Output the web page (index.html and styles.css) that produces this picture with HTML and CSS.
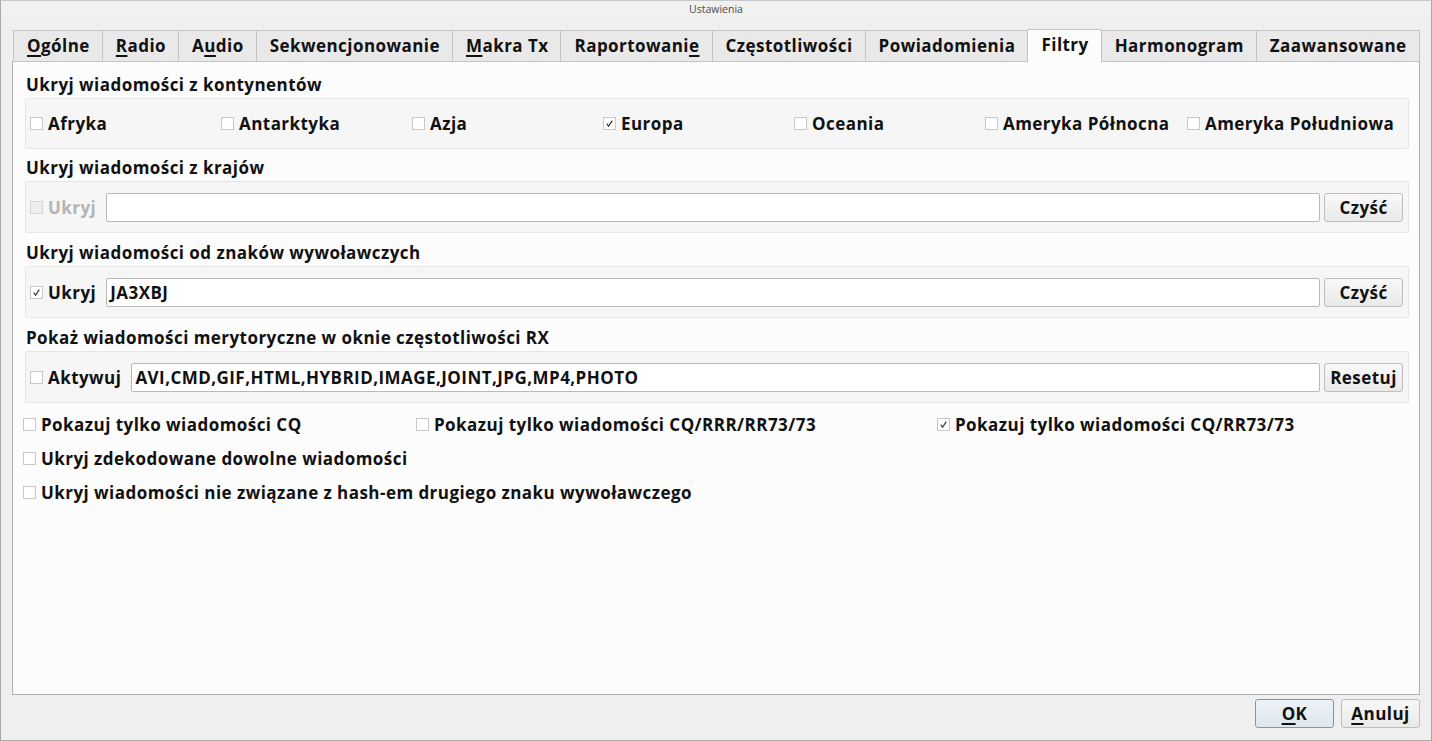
FILE: index.html
```html
<!DOCTYPE html>
<html>
<head>
    <title>Ustawienia</title>
    <meta charset="utf-8">
    <link rel="stylesheet" href="styles.css">
</head>
<body>
    <div class="window">
        <div class="titlebar">Ustawienia</div>
        <div class="dialog">
            <!-- Tab strip -->
            <div class="tabs">
                <div class="tab"><u>O</u>gólne</div>
                <div class="tab"><u>R</u>adio</div>
                <div class="tab">A<u>u</u>dio</div>
                <div class="tab">Sekwencjonowanie</div>
                <div class="tab"><u>M</u>akra Tx</div>
                <div class="tab">Raportowani<u>e</u></div>
                <div class="tab">Częstotliwości</div>
                <div class="tab">Powiadomienia</div>
                <div class="tab active">Filtry</div>
                <div class="tab">Harmonogram</div>
                <div class="tab">Zaawansowane</div>
            </div>

            <div class="panel">
                <div class="heading">Ukryj wiadomości z kontynentów</div>
                <div class="group continents">
                    <label class="check cont"><span class="box"></span>Afryka</label>
                    <label class="check cont"><span class="box"></span>Antarktyka</label>
                    <label class="check cont"><span class="box"></span>Azja</label>
                    <label class="check cont"><span class="box checked"><svg viewBox="0 0 12 12"><path d="M3 6.2 L5 9 L9 2.8"/></svg></span>Europa</label>
                    <label class="check cont"><span class="box"></span>Oceania</label>
                    <label class="check cont short"><span class="box"></span>Ameryka Północna</label>
                    <label class="check"><span class="box"></span>Ameryka Południowa</label>
                </div>

                <div class="heading">Ukryj wiadomości z krajów</div>
                <div class="group">
                    <label class="check disabled"><span class="box"></span>Ukryj</label>
                    <div class="field"></div>
                    <button class="btn">Czyść</button>
                </div>

                <div class="heading">Ukryj wiadomości od znaków wywoławczych</div>
                <div class="group">
                    <label class="check"><span class="box checked"><svg viewBox="0 0 12 12"><path d="M3 6.2 L5 9 L9 2.8"/></svg></span>Ukryj</label>
                    <div class="field">JA3XBJ</div>
                    <button class="btn">Czyść</button>
                </div>

                <div class="heading">Pokaż wiadomości merytoryczne w oknie częstotliwości RX</div>
                <div class="group">
                    <label class="check"><span class="box"></span>Aktywuj</label>
                    <div class="field">AVI,CMD,GIF,HTML,HYBRID,IMAGE,JOINT,JPG,MP4,PHOTO</div>
                    <button class="btn">Resetuj</button>
                </div>

                <div class="options">
                    <div class="row">
                        <label class="check col1"><span class="box"></span>Pokazuj tylko wiadomości CQ</label>
                        <label class="check col2"><span class="box"></span>Pokazuj tylko wiadomości CQ/RRR/RR73/73</label>
                        <label class="check"><span class="box checked"><svg viewBox="0 0 12 12"><path d="M3 6.2 L5 9 L9 2.8"/></svg></span>Pokazuj tylko wiadomości CQ/RR73/73</label>
                    </div>
                    <div class="row">
                        <label class="check"><span class="box"></span>Ukryj zdekodowane dowolne wiadomości</label>
                    </div>
                    <div class="row">
                        <label class="check"><span class="box"></span>Ukryj wiadomości nie związane z hash-em drugiego znaku wywoławczego</label>
                    </div>
                </div>
            </div>

            <div class="buttons">
                <button class="btn default"><u>O</u>K</button>
                <button class="btn"><u>A</u>nuluj</button>
            </div>
        </div>
    </div>
</body>
</html>
```

FILE: styles.css
```css
* {
    box-sizing: border-box;
}
body {
    margin: 0;
    width: 1432px;
    height: 741px;
    overflow: hidden;
    background: #efefef;
    font-family: 'Open Sans', 'DejaVu Sans', sans-serif;
    font-weight: 700;
    font-size: 17px;
    letter-spacing: 0.45px;
    color: #111;
}
u {
    text-decoration-thickness: 2px;
    text-underline-offset: 3px;
}
.window {
    height: 741px;
    border: 1px solid #a9a9a9;
    border-top-color: #c9c9c9;
    display: flex;
    flex-direction: column;
}
.titlebar {
    height: 16px;
    line-height: 16px;
    text-align: center;
    font-family: 'Open Sans', sans-serif;
    font-weight: 400;
    font-size: 10.5px;
    letter-spacing: 0;
    color: #4a4a4a;
    background: #f1f1f1;
}
.dialog {
    flex: 1;
    padding: 12px 11px 0 11px;
    display: flex;
    flex-direction: column;
}
.tabs {
    display: flex;
    align-items: flex-end;
    height: 33px;
    padding-left: 1px;
    position: relative;
    z-index: 1;
}
.tab {
    height: 31px;
    line-height: 30px;
    padding: 0 12px 0 13px;
    background: #e9e9e9;
    border: 1px solid #c4c4c4;
    border-bottom: none;
    border-left: none;
    margin-bottom: 1px;
    white-space: nowrap;
}
.tab:first-child {
    border-left: 1px solid #c4c4c4;
}
.tab.active {
    height: 33px;
    line-height: 30px;
    background: #fcfcfc;
    border-left: 1px solid #c4c4c4;
    border-radius: 2px 2px 0 0;
    margin-left: -1px;
    margin-bottom: 0;
}
.panel {
    height: 634px;
    margin-top: -1px;
    background: #fcfcfc;
    border: 1px solid #b3b3b3;
    border-top-color: #c4c4c4;
    padding: 13px 10px 0 12px;
}
.heading {
    height: 20px;
    line-height: 20px;
    padding-left: 1px;
    margin-bottom: 3px;
}
.group {
    height: 52px;
    background: #f6f6f6;
    border: 1px solid #e6e6e6;
    border-radius: 2px;
    display: flex;
    align-items: center;
    padding: 0 5px 0 4px;
    margin-bottom: 10px;
}
.group.continents {
    height: 51px;
    margin-bottom: 9px;
}
.check {
    display: flex;
    align-items: center;
    height: 20px;
    white-space: nowrap;
}
.box {
    width: 13px;
    height: 13px;
    border: 1px solid #c8c8c8;
    background: #fff;
    margin-right: 5px;
    flex: none;
    display: flex;
}
.box svg {
    width: 11px;
    height: 11px;
}
.box path {
    fill: none;
    stroke: #333;
    stroke-width: 1.3;
}
.cont {
    width: 191px;
}
.cont.short {
    width: 202px;
}
.check.disabled {
    color: #b4b4b4;
}
.check.disabled .box {
    background: #eeeeee;
    border-color: #d6d6d6;
}
.field {
    flex: 1;
    height: 29px;
    line-height: 27px;
    margin: 0 4px 0 10px;
    background: #fff;
    border: 1px solid #b9b9b9;
    border-radius: 2px;
    padding: 0 3px;
    font-weight: 700;
}
.btn {
    width: 79px;
    height: 29px;
    font-family: inherit;
    font-weight: 700;
    font-size: 17px;
    letter-spacing: 0.45px;
    color: #111;
    background: linear-gradient(#f8f8f8, #e9e9e9);
    border: 1px solid #bdbdbd;
    border-radius: 3px;
    padding: 0;
}
.options {
    padding-top: 1px;
    margin-left: -2px;
}
.row {
    display: flex;
    height: 20px;
    margin-bottom: 14px;
}
.col1 {
    width: 393px;
}
.col2 {
    width: 521px;
}
.buttons {
    display: flex;
    justify-content: flex-end;
    gap: 7px;
    padding-top: 4px;
}
.btn.default {
    background: linear-gradient(#eef3f8, #dde6ee);
    border-color: #7f97ad;
}
```
